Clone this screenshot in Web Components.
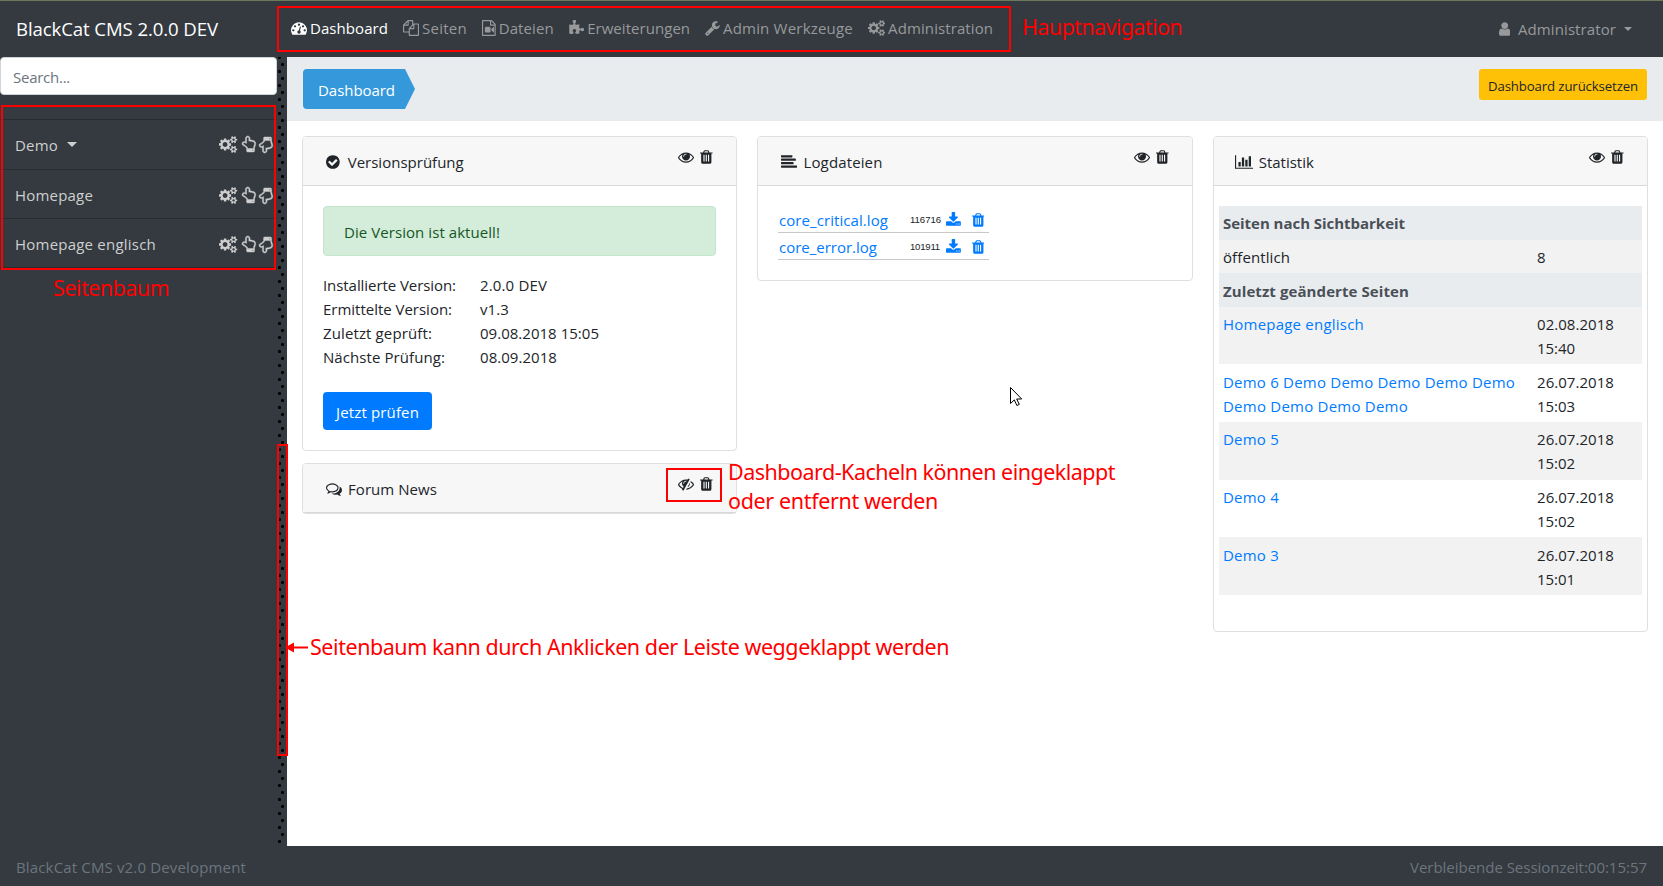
<!DOCTYPE html>
<html lang="de">
<head>
<meta charset="utf-8">
<title>BlackCat CMS</title>
<style>
html, body {
  margin: 0;
  height: 100%;
}
body {
  font-family: "Open Sans", "Noto Sans", sans-serif;
  font-size: 15px;
  line-height: 24px;
  color: #212529;
  overflow: hidden;
}
</style>
</head>
<body>
<cms-app></cms-app>

<script>
// icon name -> [viewBox, path]
const icons = {
  dashboard: ["0 0 1792 1792", "M384 1152q0-53-37.5-90.5t-90.5-37.5-90.5 37.5-37.5 90.5 37.5 90.5 90.5 37.5 90.5-37.5 37.5-90.5zm192-448q0-53-37.5-90.5t-90.5-37.5-90.5 37.5-37.5 90.5 37.5 90.5 90.5 37.5 90.5-37.5 37.5-90.5zm428 481l101-382q6-26-7.5-48.5t-38.5-29.5-48 6.5-30 39.5l-101 382q-60 5-107 43.5t-63 98.5q-20 77 20 146t117 89 146-20 89-117q16-60-6-117t-72-91zm660-33q0-53-37.5-90.5t-90.5-37.5-90.5 37.5-37.5 90.5 37.5 90.5 90.5 37.5 90.5-37.5 37.5-90.5zm-640-640q0-53-37.5-90.5t-90.5-37.5-90.5 37.5-37.5 90.5 37.5 90.5 90.5 37.5 90.5-37.5 37.5-90.5zm448 192q0-53-37.5-90.5t-90.5-37.5-90.5 37.5-37.5 90.5 37.5 90.5 90.5 37.5 90.5-37.5 37.5-90.5zm320 448q0 261-141 483-19 29-54 29h-1402q-35 0-54-29-141-221-141-483 0-182 71-348t191-286 286-191 348-71 348 71 286 191 191 286 71 348z"],
  files: ["0 0 1792 1792", "M1696 384q40 0 68 28t28 68v1216q0 40-28 68t-68 28h-960q-40 0-68-28t-28-68v-288h-544q-40 0-68-28t-28-68v-672q0-40 20-88t48-76l408-408q28-28 76-48t88-20h416q40 0 68 28t28 68v328q68-40 128-40h416zm-544 213l-299 299h299v-299zm-640-384l-299 299h299v-299zm196 647l316-316v-416h-384v416q0 40-28 68t-68 28h-416v640h512v-256q0-40 20-88t48-76zm956 804v-1152h-384v416q0 40-28 68t-68 28h-416v640h896z"],
  video: ["128 0 1536 1792", "M1596 380q28 28 48 76t20 88v1152q0 40-28 68t-68 28h-1344q-40 0-68-28t-28-68v-1600q0-40 28-68t68-28h896q40 0 88 20t76 48zm-444-244v376h376q-10-29-22-41l-313-313q-12-12-41-22zm384 1528v-1024h-416q-40 0-68-28t-28-68v-416h-768v1536h1280zm-576-896q52 0 90 38t38 90v384q0 52-38 90t-90 38h-384q-52 0-90-38t-38-90v-384q0-52 38-90t90-38h384zm492 2q20 8 20 30v576q0 22-20 30-8 2-12 2-14 0-23-9l-265-266v-90l265-266q9-9 23-9 4 0 12 2z"],
  puzzle: ["64 0 1728 1792", "M1755 1083q0 81-44.5 135t-123.5 54q-41 0-77.5-17.5t-59-38-56.5-38-71-17.5q-110 0-110 124 0 39 16 115t15 115v5q-22 0-33 1-34 3-97.5 11.5t-115.5 13.5-98 5q-61 0-103-26.5t-42-83.5q0-37 17.5-71t38-56.5 38-59 17.5-77.5q0-79-54-123.5t-135-44.5q-84 0-143 45.5t-59 127.5q0 43 15 83t33.5 64.5 33.5 53 15 50.5q0 45-46 89-37 35-117 35-95 0-245-24-9-2-27.5-4t-27.5-4l-13-2q-1 0-3-1-2 0-2-1v-1024q2 1 17.5 3.5t34 5 21.5 3.5q150 24 245 24 80 0 117-35 46-44 46-89 0-22-15-50.5t-33.5-53-33.5-64.5-15-83q0-82 59-127.5t144-45.5q80 0 134 44.5t54 123.5q0 41-17.5 77.5t-38 59-38 56.5-17.5 71q0 57 42 83.5t103 26.5q64 0 180-15t163-17v2q-1 2-3.5 17.5t-5 34-3.5 21.5q-24 150-24 245 0 80 35 117 44 46 89 46 22 0 50.5-15t53-33.5 64.5-33.5 83-15q82 0 127.5 59t45.5 143z"],
  wrench: ["64 0 1664 1792", "M448 1472q0-26-19-45t-45-19-45 19-19 45 19 45 45 19 45-19 19-45zm644-420l-682 682q-37 37-90 37-52 0-91-37l-106-108q-38-36-38-90 0-53 38-91l681-681q39 98 114.5 173.5t173.5 114.5zm634-435q0 39-23 106-47 134-164.5 217.5t-258.5 83.5q-185 0-316.5-131.5t-131.5-316.5 131.5-316.5 316.5-131.5q58 0 121.5 16.5t107.5 46.5q16 11 16 28t-16 28l-293 169v224l193 107q5-3 79-48.5t135.5-81 70.5-35.5q15 0 23.5 10t8.5 25z"],
  cogs: ["-64 0 1920 1792", "M832 896q0-106-75-181t-181-75-181 75-75 181 75 181 181 75 181-75 75-181zm768 512q0-52-38-90t-90-38-90 38-38 90q0 53 37.5 90.5t90.5 37.5 90.5-37.5 37.5-90.5zm0-1024q0-52-38-90t-90-38-90 38-38 90q0 53 37.5 90.5t90.5 37.5 90.5-37.5 37.5-90.5zm-384 421v185q0 10-7 19.5t-16 10.5l-155 24q-11 35-32 76 34 48 90 115 7 11 7 20 0 12-7 19-23 30-82.5 89.5t-78.5 59.5q-11 0-21-7l-115-90q-37 19-77 31-11 108-23 155-7 24-30 24h-186q-11 0-20-7.5t-10-17.5l-23-153q-34-10-75-31l-118 89q-7 7-20 7-11 0-21-8-144-133-144-160 0-9 7-19 10-14 41-53t47-61q-23-44-35-82l-152-24q-10-1-17-9.5t-7-19.5v-185q0-10 7-19.5t16-10.5l155-24q11-35 32-76-34-48-90-115-7-11-7-20 0-12 7-20 22-30 82-89t79-59q11 0 21 7l115 90q34-18 77-32 11-108 23-154 7-24 30-24h186q11 0 20 7.5t10 17.5l23 153q34 10 75 31l118-89q8-7 20-7 11 0 21 8 144 133 144 160 0 9-7 19-12 16-42 54t-45 60q23 48 34 82l152 23q10 2 17 10.5t7 19.5zm640 533v140q0 16-149 31-12 27-30 52 51 113 51 138 0 4-4 7-122 71-124 71-8 0-46-47t-52-68q-20 2-30 2t-30-2q-14 21-52 68t-46 47q-2 0-124-71-4-3-4-7 0-25 51-138-18-25-30-52-149-15-149-31v-140q0-16 149-31 13-29 30-52-51-113-51-138 0-4 4-7 4-2 35-20t59-34 30-16q8 0 46 46.5t52 67.5q20-2 30-2t30 2q51-71 92-112l6-2q4 0 124 70 4 3 4 7 0 25-51 138 17 23 30 52 149 15 149 31zm0-1024v140q0 16-149 31-12 27-30 52 51 113 51 138 0 4-4 7-122 71-124 71-8 0-46-47t-52-68q-20 2-30 2t-30-2q-14 21-52 68t-46 47q-2 0-124-71-4-3-4-7 0-25 51-138-18-25-30-52-149-15-149-31v-140q0-16 149-31 13-29 30-52-51-113-51-138 0-4 4-7 4-2 35-20t59-34 30-16q8 0 46 46.5t52 67.5q20-2 30-2t30 2q51-71 92-112l6-2q4 0 124 70 4 3 4 7 0 25-51 138 17 23 30 52 149 15 149 31z"],
  user: ["256 0 1280 1792", "M1536 1399q0 109-62.5 187t-150.5 78h-854q-88 0-150.5-78t-62.5-187q0-85 8.5-160.5t31.5-152 58.5-131 94-89 134.5-34.5q131 128 313 128t313-128q76 0 134.5 34.5t94 89 58.5 131 31.5 152 8.5 160.5zm-256-887q0 159-112.5 271.5t-271.5 112.5-271.5-112.5-112.5-271.5 112.5-271.5 271.5-112.5 271.5 112.5 112.5 271.5z"],
  check: ["128 0 1536 1792", "M1412 734q0-28-18-46l-91-90q-19-19-45-19t-45 19l-408 407-226-226q-19-19-45-19t-45 19l-91 90q-18 18-18 46 0 27 18 45l362 362q19 19 45 19 27 0 46-19l543-543q18-18 18-45zm252 162q0 209-103 385.5t-279.5 279.5-385.5 103-385.5-103-279.5-279.5-103-385.5 103-385.5 279.5-279.5 385.5-103 385.5 103 279.5 279.5 103 385.5z"],
  eye: ["0 0 1792 1792", "M1664 960q-152-236-381-353 61 104 61 225 0 185-131.5 316.5t-316.5 131.5-316.5-131.5-131.5-316.5q0-121 61-225-229 117-381 353 133 205 333.5 326.5t434.5 121.5 434.5-121.5 333.5-326.5zm-720-384q0-20-14-34t-34-14q-125 0-214.5 89.5t-89.5 214.5q0 20 14 34t34 14 34-14 14-34q0-86 61-147t147-61q20 0 34-14t14-34zm848 384q0 34-20 69-140 230-376.5 368.5t-499.5 138.5-499.5-139-376.5-368q-20-35-20-69t20-69q140-229 376.5-368t499.5-139 499.5 139 376.5 368q20 35 20 69z"],
  "eye-slash": ["0 0 1792 1792", "M555 1335l78-141q-87-63-136-159t-49-203q0-121 61-225-229 117-381 353 167 258 427 375zm389-759q0-20-14-34t-34-14q-125 0-214.5 89.5t-89.5 214.5q0 20 14 34t34 14 34-14 14-34q0-86 61-147t147-61q20 0 34-14t14-34zm363-191q0 7-1 9-106 189-316 567t-315 566l-49 89q-10 16-28 16-12 0-134-70-16-10-16-28 0-12 44-87-143-65-263.5-173t-208.5-245q-20-31-20-69t20-69q153-235 380-371t496-136q89 0 180 17l54-97q10-16 28-16 5 0 18 6t31 15.5 33 18.5 31.5 18.5 19.5 11.5q16 10 16 27zm37 447q0 139-79 253.5t-209 164.5l280-502q8 45 8 84zm448 128q0 35-20 69-39 64-109 145-150 172-347.5 267t-419.5 95l74-132q212-18 392.5-137t301.5-307q-115-179-282-294l63-112q95 64 182.5 153t144.5 184q20 34 20 69z"],
  trash: ["192 0 1408 1792", "M704 1376v-704q0-14-9-23t-23-9h-64q-14 0-23 9t-9 23v704q0 14 9 23t23 9h64q14 0 23-9t9-23zm256 0v-704q0-14-9-23t-23-9h-64q-14 0-23 9t-9 23v704q0 14 9 23t23 9h64q14 0 23-9t9-23zm256 0v-704q0-14-9-23t-23-9h-64q-14 0-23 9t-9 23v704q0 14 9 23t23 9h64q14 0 23-9t9-23zm-544-992h448l-48-117q-7-9-17-11h-317q-10 2-17 11zm928 32v64q0 14-9 23t-23 9h-96v948q0 83-47 143.5t-113 60.5h-832q-66 0-113-58.5t-47-141.5v-952h-96q-14 0-23-9t-9-23v-64q0-14 9-23t23-9h309l70-167q15-37 54-63t79-26h320q40 0 79 26t54 63l70 167h309q14 0 23 9t9 23z"],
  lines: ["0 0 1792 1792", "M1792 1344v128q0 26-19 45t-45 19h-1664q-26 0-45-19t-19-45v-128q0-26 19-45t45-19h1664q26 0 45 19t19 45zm-384-384v128q0 26-19 45t-45 19h-1280q-26 0-45-19t-19-45v-128q0-26 19-45t45-19h1280q26 0 45 19t19 45zm256-384v128q0 26-19 45t-45 19h-1536q-26 0-45-19t-19-45v-128q0-26 19-45t45-19h1536q26 0 45 19t19 45zm-384-384v128q0 26-19 45t-45 19h-1152q-26 0-45-19t-19-45v-128q0-26 19-45t45-19h1152q26 0 45 19t19 45z"],
  chart: ["0 0 2048 1792", "M640 896v512h-256v-512h256zm384-512v1024h-256v-1024h256zm1024 1152v128h-2048v-1536h128v1408h1920zm-640-896v768h-256v-768h256zm384-384v1152h-256v-1152h256z"],
  comments: ["0 0 1792 1792", "M704 384q-153 0-286 52t-211.5 141-78.5 191q0 82 53 158t149 132l97 56-35 84q34-20 62-39l44-31 53 10q78 14 153 14 153 0 286-52t211.5-141 78.5-191-78.5-191-211.5-141-286-52zm0-128q191 0 353.5 68.5t256.5 186.5 94 257-94 257-256.5 186.5-353.5 68.5q-86 0-176-16-124 88-278 128-36 9-86 16h-3q-11 0-20.5-8t-11.5-21q-1-3-1-6.5t.5-6.5 2-6l2.5-5 3.5-5.5 4-5 4.5-5 4-4.5q5-6 23-25t26-29.5 22.5-29 25-38.5 20.5-44q-124-72-195-177t-71-224q0-139 94-257t256.5-186.5 353.5-68.5zm822 1169q10 24 20.5 44t25 38.5 22.5 29 26 29.5 23 25q1 1 4 4.5t4.5 5 4 5 3.5 5.5l2.5 5 2 6 .5 6.5-1 6.5q-3 14-13 22t-22 7q-50-7-86-16-154-40-278-128-90 16-176 16-271 0-472-132 58 4 88 4 161 0 309-45t264-129q125-92 192-212t67-254q0-77-23-152 129 71 204 178t75 230q0 120-71 224.5t-195 176.5z"],
  download: ["64 0 1664 1792", "M1344 1344q0-26-19-45t-45-19-45 19-19 45 19 45 45 19 45-19 19-45zm256 0q0-26-19-45t-45-19-45 19-19 45 19 45 45 19 45-19 19-45zm128-224v320q0 40-28 68t-68 28h-1472q-40 0-68-28t-28-68v-320q0-40 28-68t68-28h465l135 136q58 56 136 56t136-56l136-136h464q40 0 68 28t28 68zm-325-569q17 41-14 70l-448 448q-18 19-45 19t-45-19l-448-448q-31-29-14-70 17-39 59-39h256v-448q0-26 19-45t45-19h256q26 0 45 19t19 45v448h256q42 0 59 39z"],
  hand: ["128 0 1536 1792", "M1408 1600q0-26-19-45t-45-19-45 19-19 45 19 45 45 19 45-19 19-45zm128-764q0-189-167-189-26 0-56 5-16-30-52.5-47.5t-73.5-17.5-69 18q-50-53-119-53-25 0-55.5 10t-47.5 25v-331q0-52-38-90t-90-38q-51 0-89.5 39t-38.5 89v576q-20 0-48.5-15t-55-33-68-33-84.5-15q-67 0-97.5 44.5t-30.5 115.5q0 24 139 90 44 24 65 37 64 40 145 112 81 71 106 101 57 69 57 140v32h640v-32q0-72 32-167t64-193.5 32-179.5zm128-5q0 133-69 322-59 164-59 223v288q0 53-37.5 90.5t-90.5 37.5h-640q-53 0-90.5-37.5t-37.5-90.5v-288q0-10-4.5-21.5t-14-23.5-18-22.5-22.5-24-21.5-20.5-21.5-19-17-14q-74-65-129-100-21-13-62-33t-72-37-63-40.5-49.5-55-17.5-69.5q0-125 67-206.5t189-81.5q68 0 128 22v-374q0-104 77-181t179-77q105 0 181 75.5t76 180.5v169q62 4 119 37 21-3 43-3 101 0 178 60 139-1 219.5 85t80.5 227z"]
};

class CmsIcon extends HTMLElement {
  constructor() {
    super();
    this.attachShadow({ mode: "open" });
  }
  connectedCallback() {
    const [box, path] = icons[this.getAttribute("name")];
    const [x, y, w, h] = box.split(" ").map(Number);
    const size = Number(this.getAttribute("size") || 16);
    this.shadowRoot.innerHTML = `
<style>
:host { display: inline-flex; flex: none; }
:host([flip]) { transform: scaleY(-1); }
svg { display: block; fill: currentColor; }
:host([name="hand"]) svg { stroke: currentColor; stroke-width: 50px; overflow: visible; }
</style>
<svg width="${(w / 1792) * size}" height="${size}" viewBox="${box}"><path d="${path}"/></svg>`;
  }
}

// one line of text, tracked so that it runs to the width given in w
class CmsText extends HTMLElement {
  constructor() {
    super();
    this.attachShadow({ mode: "open" }).innerHTML = `
<style>:host { display: inline-block; white-space: nowrap; }</style><slot></slot>`;
  }
  connectedCallback() {
    const w = Number(this.getAttribute("w"));
    const n = this.textContent.length;
    if (w && n) {
      this.style.letterSpacing = (w - this.getBoundingClientRect().width) / n + "px";
    }
  }
}

class CmsNavItem extends HTMLElement {
  constructor() {
    super();
    this.attachShadow({ mode: "open" }).innerHTML = `
<style>
:host { display: flex; align-items: center; color: #98999b; }
:host([active]) { color: #fff; }
cms-icon { margin-right: 3px; }
</style>
<cms-icon name="${this.getAttribute("icon")}"></cms-icon><slot></slot>`;
  }
}

class CmsNavbar extends HTMLElement {
  constructor() {
    super();
    this.attachShadow({ mode: "open" }).innerHTML = `
<style>
:host {
  display: flex;
  box-sizing: border-box;
  height: 57px;
  padding: 0 31px 3px 16px;
  border-top: 1px solid #6c7a5c;
  background: #343a40;
  align-items: center;
}
.brand { width: 275px; font-size: 18.6px; color: #fff; padding-top: 2px; }
nav { display: flex; gap: 15px; flex: 1; }
.user { display: flex; align-items: center; color: #98999b; gap: 8px; padding-top: 2px; }
.caret { border: 4.5px solid transparent; border-top-color: currentColor; border-bottom: 0; }
</style>
<div class="brand"><cms-text w="202">BlackCat CMS 2.0.0 DEV</cms-text></div>
<nav>
  <cms-nav-item icon="dashboard" active><cms-text w="78">Dashboard</cms-text></cms-nav-item>
  <cms-nav-item icon="files"><cms-text w="45">Seiten</cms-text></cms-nav-item>
  <cms-nav-item icon="video"><cms-text w="55">Dateien</cms-text></cms-nav-item>
  <cms-nav-item icon="puzzle"><cms-text w="103">Erweiterungen</cms-text></cms-nav-item>
  <cms-nav-item icon="wrench"><cms-text w="130">Admin Werkzeuge</cms-text></cms-nav-item>
  <cms-nav-item icon="cogs"><cms-text w="105">Administration</cms-text></cms-nav-item>
</nav>
<div class="user">
  <cms-icon name="user"></cms-icon>
  <cms-text w="98">Administrator</cms-text>
  <span class="caret"></span>
</div>`;
  }
}

class CmsPage extends HTMLElement {
  constructor() {
    super();
    this.attachShadow({ mode: "open" }).innerHTML = `
<style>
:host {
  display: flex;
  box-sizing: border-box;
  height: 49px;
  padding: 2px 4px 0 15px;
  align-items: center;
  border-bottom: 1px solid #292c2f;
  color: #cfcfcf;
}
:host([open]) { height: 50px; padding-top: 0; }
.name { display: flex; align-items: center; flex: 1; gap: 9px; }
.caret { display: none; border: 5.5px solid transparent; border-top-color: currentColor; border-bottom: 0; }
:host([open]) .caret { display: block; }
.tools { display: flex; gap: 4px; }
</style>
<span class="name"><slot></slot><span class="caret"></span></span>
<span class="tools">
  <cms-icon name="cogs" size="17"></cms-icon>
  <cms-icon name="hand" size="16"></cms-icon>
  <cms-icon name="hand" size="16" flip></cms-icon>
</span>`;
  }
}

class CmsSidebar extends HTMLElement {
  constructor() {
    super();
    this.attachShadow({ mode: "open" }).innerHTML = `
<style>
:host { display: flex; width: 287px; background: #343a40; }
.tree { width: 277px; }
.search {
  box-sizing: border-box;
  height: 38px;
  padding: 7px 12px;
  border: 1px solid #ced4da;
  border-radius: 4px;
  background: #fff;
  color: #6c757d;
}
.pages { margin-top: 24px; border-top: 1px solid #292c2f; }
.bar {
  width: 10px;
  background:
    radial-gradient(circle at 2.5px 7.5px, #000 1.3px, transparent 1.7px) 0 -7px / 10px 14px,
    radial-gradient(circle at 5.5px 7.5px, #000 1.3px, transparent 1.7px) 0 0 / 10px 14px;
}
</style>
<div class="tree">
  <div class="search"><cms-text w="57">Search...</cms-text></div>
  <div class="pages">
    <cms-page open><cms-text w="43">Demo</cms-text></cms-page>
    <cms-page><cms-text w="78">Homepage</cms-text></cms-page>
    <cms-page><cms-text w="141">Homepage englisch</cms-text></cms-page>
  </div>
</div>
<div class="bar"></div>`;
  }
}

class CmsCard extends HTMLElement {
  constructor() {
    super();
    const closed = this.hasAttribute("closed");
    this.attachShadow({ mode: "open" }).innerHTML = `
<style>
:host {
  display: block;
  box-sizing: border-box;
  border: 1px solid #dfdfdf;
  border-radius: 4px;
  background: #fff;
}
header {
  display: flex;
  box-sizing: border-box;
  height: 49px;
  padding: 12px 23px 0 var(--head, 23px);
  border-bottom: 1px solid #d9d9d9;
  background: #f7f7f7;
  border-radius: 3px 3px 0 0;
}
h5 { display: flex; flex: 1; margin: 0; align-items: center; height: 26px; font: inherit; gap: var(--gap, 7px); }
.tools { display: flex; gap: 6px; }
</style>
<header>
  <h5><cms-icon name="${this.getAttribute("icon")}"></cms-icon><slot name="title"></slot></h5>
  <span class="tools">
    <cms-icon name="${closed ? "eye-slash" : "eye"}"></cms-icon>
    <cms-icon name="trash"></cms-icon>
  </span>
</header>
<slot></slot>`;
  }
}

class CmsVersion extends HTMLElement {
  constructor() {
    super();
    this.attachShadow({ mode: "open" }).innerHTML = `
<style>
:host { display: block; padding: 20px 20px 20px; }
.alert {
  box-sizing: border-box;
  height: 50px;
  padding: 13px 20px;
  border: 1px solid #c3e6cb;
  border-radius: 4px;
  background: #d4edda;
  color: #155724;
}
dl { display: grid; grid-template-columns: 157px 1fr; margin: 17px 0 23px; }
dd { margin: 0; }
button {
  display: block;
  height: 38px;
  padding: 1px 13px 0;
  border: 0;
  border-radius: 4px;
  background: #007bff;
  color: #fff;
  font: inherit;
}
</style>
<div class="alert"><cms-text w="156">Die Version ist aktuell!</cms-text></div>
<dl>
  <dt><cms-text w="133">Installierte Version:</cms-text></dt><dd><cms-text w="67">2.0.0 DEV</cms-text></dd>
  <dt><cms-text w="129">Ermittelte Version:</cms-text></dt><dd><cms-text w="29">v1.3</cms-text></dd>
  <dt><cms-text w="109">Zuletzt geprüft:</cms-text></dt><dd><cms-text w="119">09.08.2018 15:05</cms-text></dd>
  <dt><cms-text w="122">Nächste Prüfung:</cms-text></dt><dd><cms-text w="77">08.09.2018</cms-text></dd>
</dl>
<button><cms-text w="83">Jetzt prüfen</cms-text></button>`;
  }
}

class CmsLogs extends HTMLElement {
  constructor() {
    super();
    this.attachShadow({ mode: "open" }).innerHTML = `
<style>
:host { display: block; padding: 20px 20px 20px; }
.row {
  display: flex;
  box-sizing: border-box;
  width: 211px;
  height: 27px;
  padding: 2px 4px 0 1px;
  border-bottom: 1px solid #c8c8c8;
  color: #007bff;
}
.name { width: 131px; }
.size { width: 36px; font: 9.6px/23px "Liberation Sans", sans-serif; color: #212529; }
cms-icon { margin-top: 4px; }
.trash { margin-left: 11px; }
</style>
<div class="row">
  <span class="name"><cms-text w="109">core_critical.log</cms-text></span>
  <span class="size"><cms-text w="31">116716</cms-text></span>
  <cms-icon name="download"></cms-icon><cms-icon class="trash" name="trash"></cms-icon>
</div>
<div class="row">
  <span class="name"><cms-text w="98">core_error.log</cms-text></span>
  <span class="size"><cms-text w="30">101911</cms-text></span>
  <cms-icon name="download"></cms-icon><cms-icon class="trash" name="trash"></cms-icon>
</div>`;
  }
}

class CmsStats extends HTMLElement {
  constructor() {
    super();
    const pages = [
      [[["Homepage englisch", 141]], "02.08.2018", "15:40", 57],
      [[["Demo 6 Demo Demo Demo Demo Demo", 292], ["Demo Demo Demo Demo", 185]], "26.07.2018", "15:03", 58],
      [[["Demo 5", 56]], "26.07.2018", "15:02", 58],
      [[["Demo 4", 56]], "26.07.2018", "15:02", 57],
      [[["Demo 3", 56]], "26.07.2018", "15:01", 58]
    ];
    const rows = pages.map(([name, day, time, h], i) => `
<div class="row${i % 2 ? "" : " odd"}${i === 1 || i === 4 ? " low" : ""}" style="height:${h}px">
  <a>${name.map(([t, w]) => `<cms-text w="${w}">${t}</cms-text>`).join("<br>")}</a>
  <span><cms-text w="77">${day}</cms-text><br><cms-text w="38">${time}</cms-text></span>
</div>`).join("");
    this.attachShadow({ mode: "open" }).innerHTML = `
<style>
:host { display: block; padding: 20px 5px 36px; }
.row {
  display: grid;
  grid-template-columns: 314px 1fr;
  box-sizing: border-box;
  height: 33px;
  padding: 5px 5px 0 4px;
}
.low { padding-top: 6px; }
.odd { background: #f2f2f2; }
.head { height: 34px; background: #e9ecef; color: #495057; font-weight: bold; }
a { color: #007bff; }
</style>
<div class="row head"><span><cms-text w="182">Seiten nach Sichtbarkeit</cms-text></span></div>
<div class="row odd"><span><cms-text w="67">öffentlich</cms-text></span><span>8</span></div>
<div class="row head low"><span><cms-text w="186">Zuletzt geänderte Seiten</cms-text></span></div>
${rows}`;
  }
}

class CmsFooter extends HTMLElement {
  constructor() {
    super();
    this.attachShadow({ mode: "open" }).innerHTML = `
<style>
:host {
  display: flex;
  box-sizing: border-box;
  height: 40px;
  padding: 2px 16px 0;
  align-items: center;
  justify-content: space-between;
  background: #343a40;
  color: #6c757d;
}
</style>
<cms-text w="230">BlackCat CMS v2.0 Development</cms-text>
<cms-text w="237">Verbleibende Sessionzeit:00:15:57</cms-text>`;
  }
}

// red frame or label lying over the page
class CmsNote extends HTMLElement {
  constructor() {
    super();
    const [x, y, w, h] = this.getAttribute("at").split(" ");
    this.attachShadow({ mode: "open" }).innerHTML = `
<style>
:host {
  position: absolute;
  left: ${x}px;
  top: ${y}px;
  ${w ? `width: ${w}px; height: ${h}px; border: 2px solid #f00;` : ""}
  box-sizing: border-box;
  color: #f00;
  font: 21.5px/29px "Noto Sans", "Open Sans", sans-serif;
  white-space: nowrap;
}
</style><slot></slot>`;
  }
}

class CmsApp extends HTMLElement {
  constructor() {
    super();
    this.attachShadow({ mode: "open" }).innerHTML = `
<style>
:host { display: flex; flex-direction: column; height: 100vh; position: relative; overflow: hidden; background: #fff; }
.body { display: flex; flex: 1; min-height: 0; }
main { flex: 1; }
.top {
  display: flex;
  box-sizing: border-box;
  height: 64px;
  padding: 12px 16px;
  justify-content: space-between;
  align-items: flex-start;
  background: #e9ecef;
}
.crumb {
  box-sizing: border-box;
  width: 112px;
  height: 40px;
  padding: 9px 15px;
  border-radius: 4px 0 0 4px;
  background: #3498db;
  color: #fff;
  clip-path: polygon(0 0, 102px 0, 100% 50%, 102px 100%, 0 100%);
}
.reset {
  box-sizing: border-box;
  height: 31px;
  padding: 5px 9px;
  border-radius: 3px;
  background: #ffc107;
  font-size: 13.2px;
}
.cards {
  display: grid;
  grid-template-columns: 435px 436px 435px;
  gap: 20px;
  padding: 15px 15px 0;
  align-items: start;
}
.col { display: grid; gap: 12px; }
.shut { --gap: 6px; }
svg { position: absolute; overflow: visible; }
</style>
<cms-navbar></cms-navbar>
<div class="body">
  <cms-sidebar></cms-sidebar>
  <main>
    <div class="top">
      <div class="crumb"><cms-text w="77">Dashboard</cms-text></div>
      <div class="reset"><cms-text w="150">Dashboard zurücksetzen</cms-text></div>
    </div>
    <div class="cards">
      <div class="col">
        <cms-card icon="check" style="--gap:8px"><cms-text slot="title" w="116">Versionsprüfung</cms-text><cms-version></cms-version></cms-card>
        <cms-card class="shut" icon="comments" closed><cms-text slot="title" w="89">Forum News</cms-text></cms-card>
      </div>
      <cms-card icon="lines" style="--gap:6.5px"><cms-text slot="title" w="79">Logdateien</cms-text><cms-logs></cms-logs></cms-card>
      <cms-card icon="chart" style="--head:21px;--gap:5.5px"><cms-text slot="title" w="55">Statistik</cms-text><cms-stats></cms-stats></cms-card>
    </div>
  </main>
</div>
<cms-footer></cms-footer>

<cms-note at="277 6 734 46"></cms-note>
<cms-note at="1 105 275 165"></cms-note>
<cms-note at="666 468 56 34"></cms-note>
<cms-note at="277 444 11 312"></cms-note>
<cms-note at="1022 12"><cms-text w="160">Hauptnavigation</cms-text></cms-note>
<cms-note at="53 273"><cms-text w="116">Seitenbaum</cms-text></cms-note>
<cms-note at="728 457"><cms-text w="387">Dashboard-Kacheln können eingeklappt</cms-text><br><cms-text w="210">oder entfernt werden</cms-text></cms-note>
<cms-note at="310 632"><cms-text w="639">Seitenbaum kann durch Anklicken der Leiste weggeklappt werden</cms-text></cms-note>
<svg style="left:285px;top:641px" width="23" height="13"><path d="M0 6.5L9 1.5v10zM8 5.5h15v2H8z" fill="#f00"/></svg>
<svg style="left:1010px;top:387px" width="12" height="19"><path d="M.5 .5v16l3.8-3.6 2.6 5.6 2.4-1.1-2.6-5.4h5z" fill="#fff" stroke="#000"/></svg>`;
  }
}

customElements.define("cms-icon", CmsIcon);
customElements.define("cms-nav-item", CmsNavItem);
customElements.define("cms-navbar", CmsNavbar);
customElements.define("cms-page", CmsPage);
customElements.define("cms-sidebar", CmsSidebar);
customElements.define("cms-card", CmsCard);
customElements.define("cms-version", CmsVersion);
customElements.define("cms-logs", CmsLogs);
customElements.define("cms-stats", CmsStats);
customElements.define("cms-footer", CmsFooter);
customElements.define("cms-note", CmsNote);
customElements.define("cms-app", CmsApp);
customElements.define("cms-text", CmsText);
</script>
</body>
</html>
